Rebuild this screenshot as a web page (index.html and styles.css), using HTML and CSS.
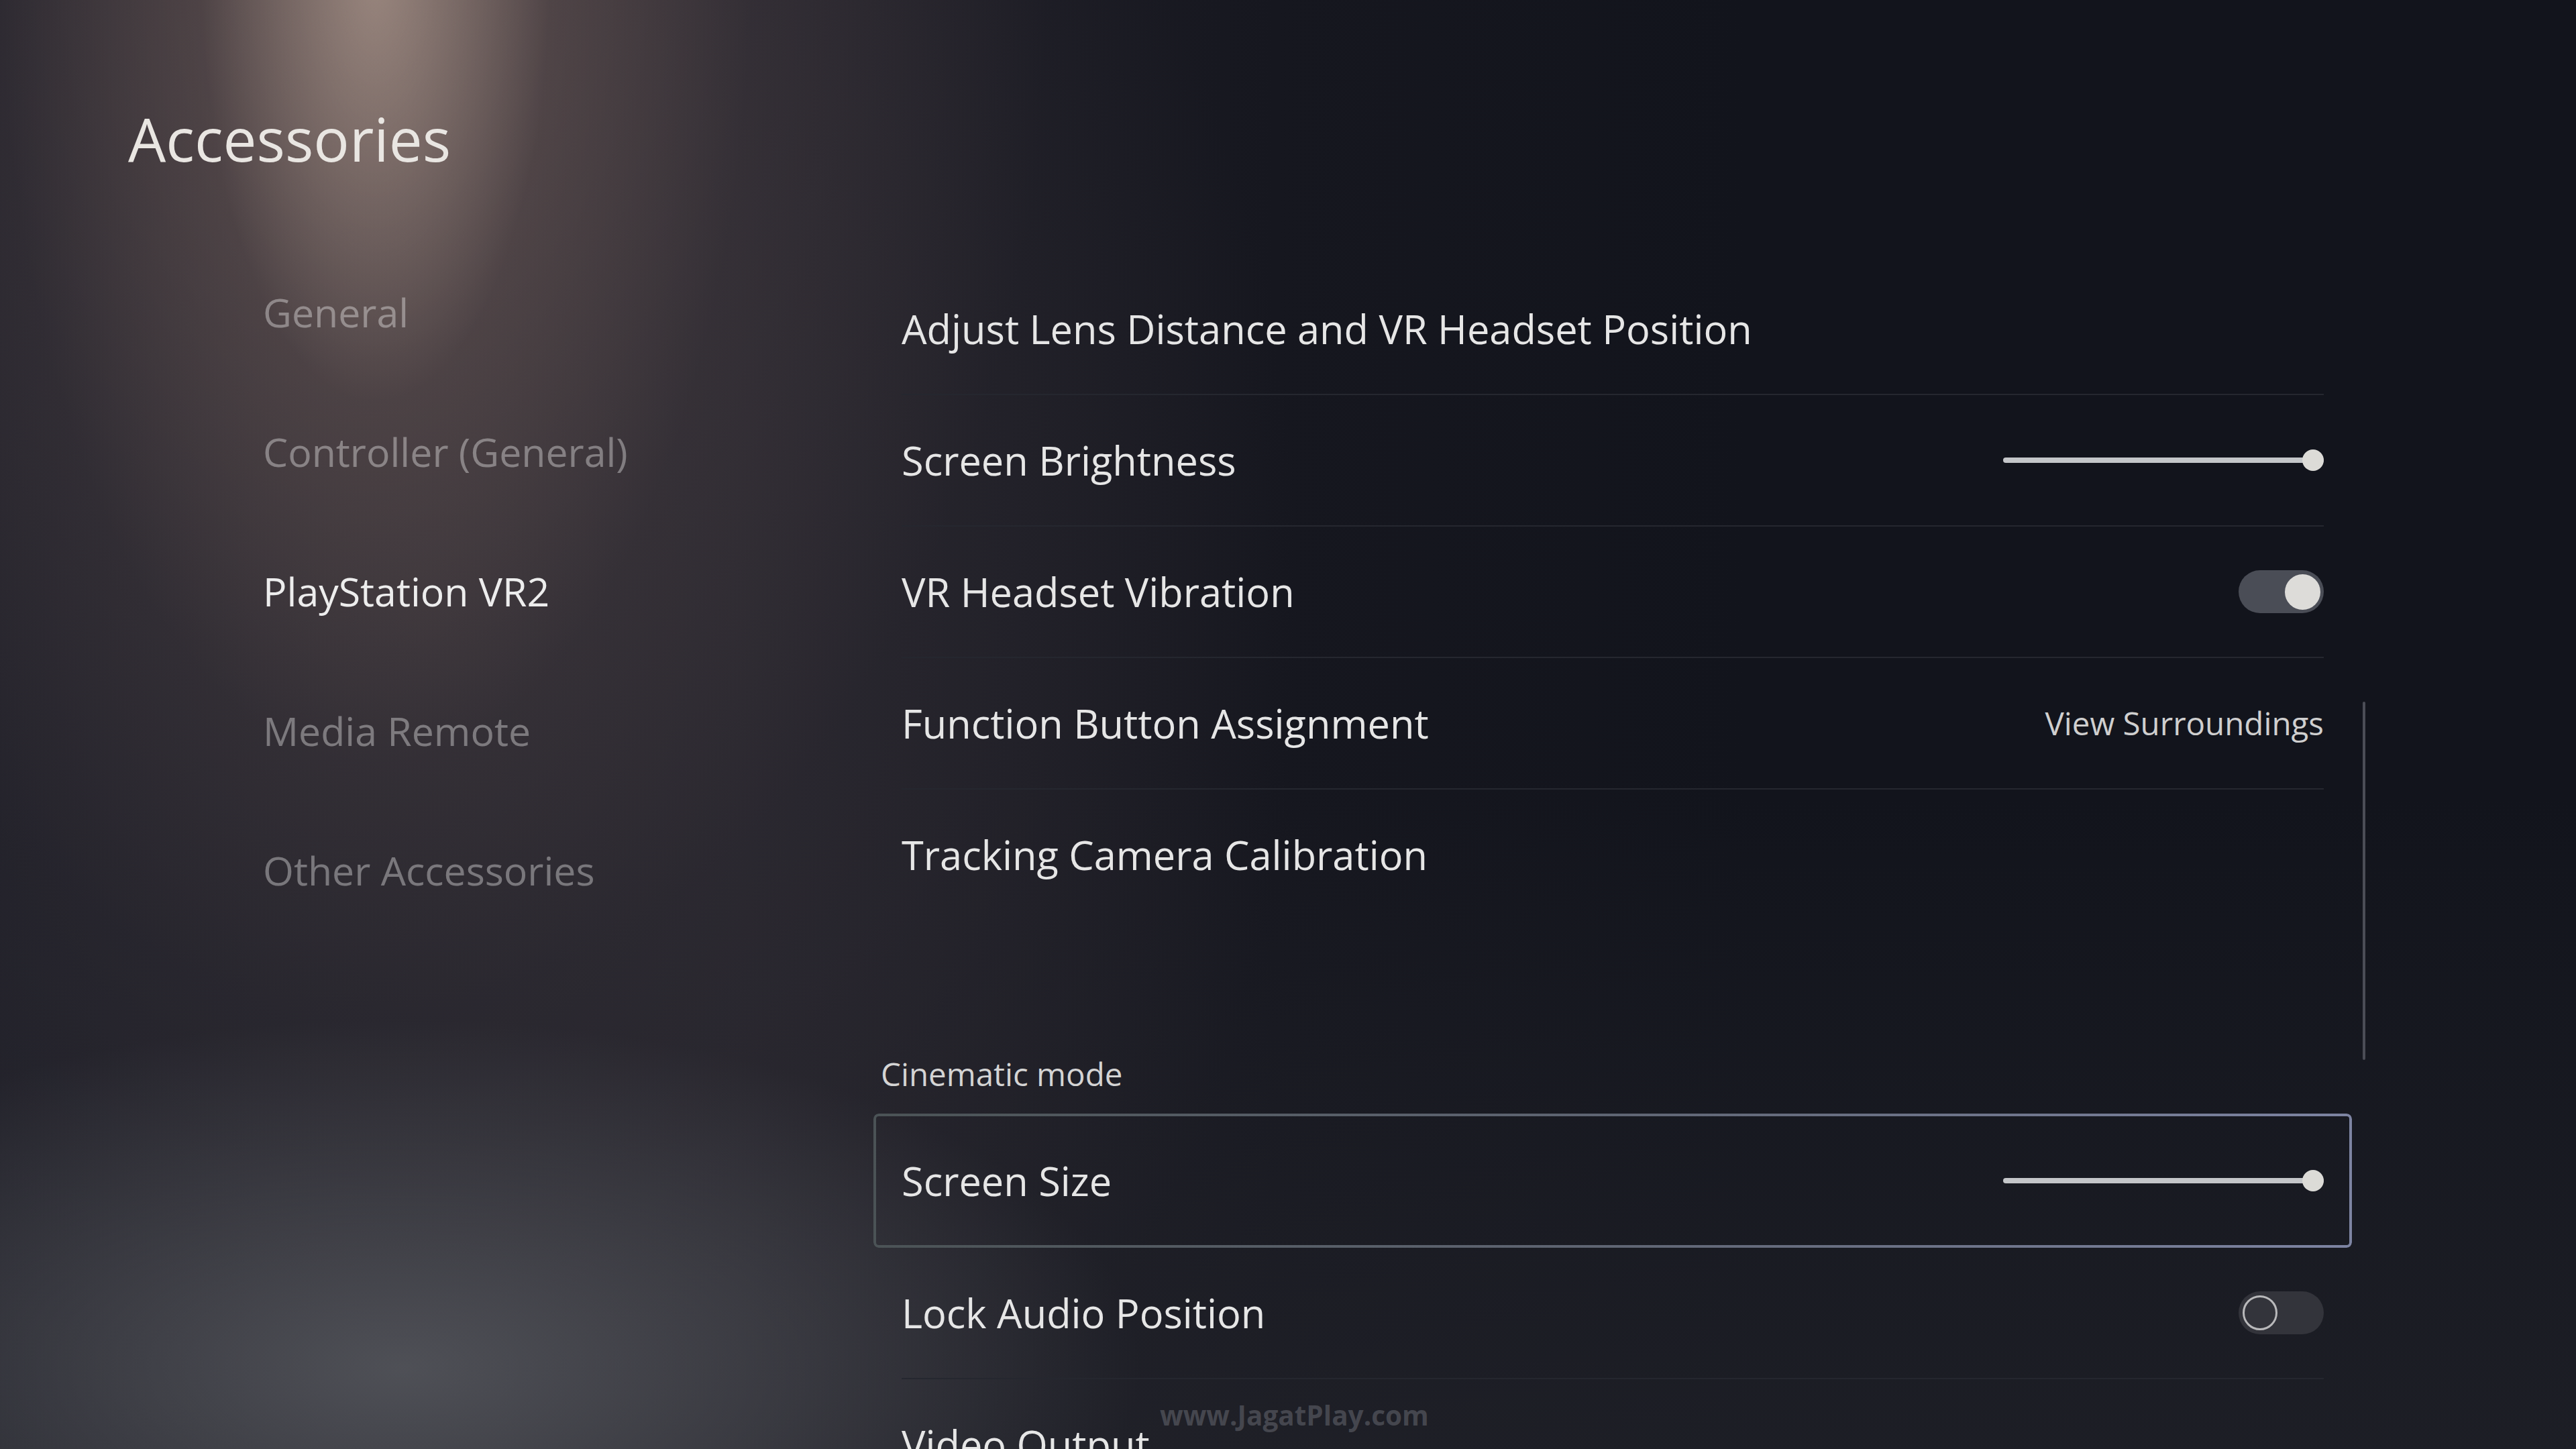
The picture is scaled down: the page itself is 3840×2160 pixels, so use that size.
FILE: index.html
```html
<!DOCTYPE html>
<html>

<head>
    <meta charset="utf-8">
    <meta name="viewport" content="width=device-width, initial-scale=1.0">
    <title>Accessories</title>
    <link rel="stylesheet" href="styles.css">
</head>

<body>
    <div class="screen">
        <!-- Colonne de gauche -->
        <aside class="side">
            <h1 class="title">Accessories</h1>
            <ul class="nav">
                <li>General</li>
                <li>Controller (General)</li>
                <li class="active">PlayStation VR2</li>
                <li>Media Remote</li>
                <li>Other Accessories</li>
            </ul>
        </aside>

        <!-- Réglages -->
        <main class="content">
            <ul class="list">
                <li class="row"><span class="label">Adjust Lens Distance and VR Headset Position</span></li>
                <li class="row">
                    <span class="label">Screen Brightness</span>
                    <div class="slider"><div class="knob"></div></div>
                </li>
                <li class="row">
                    <span class="label">VR Headset Vibration</span>
                    <div class="toggle on"><div class="knob"></div></div>
                </li>
                <li class="row">
                    <span class="label">Function Button Assignment</span>
                    <span class="value">View Surroundings</span>
                </li>
                <li class="row last"><span class="label">Tracking Camera Calibration</span></li>
            </ul>

            <h2 class="section">Cinematic mode</h2>
            <ul class="list">
                <li class="row focused">
                    <span class="label">Screen Size</span>
                    <div class="slider"><div class="knob"></div></div>
                </li>
                <li class="row">
                    <span class="label">Lock Audio Position</span>
                    <div class="toggle"><div class="knob"></div></div>
                </li>
                <li class="row"><span class="label">Video Output</span></li>
            </ul>
        </main>

        <div class="scrollbar"></div>
        <div class="watermark">www.JagatPlay.com</div>
    </div>
</body>

</html>
```

FILE: styles.css
```css
/* Style général */
body {
    margin: 0;
    padding: 0;
    width: 3840px;
    height: 2160px;
    overflow: hidden;
    font-family: 'Open Sans', 'Noto Sans', sans-serif;
    color: #e6e6e6;
    background-color: #12141c;
}

ul {
    list-style: none;
    margin: 0;
    padding: 0;
}

.screen {
    position: relative;
    width: 3840px;
    height: 2160px;
    display: grid;
    grid-template-columns: 1302px 2204px 1fr;
    background:
        radial-gradient(ellipse 260px 640px at 560px -40px, rgba(196, 174, 160, 0.55), transparent),
        radial-gradient(ellipse 560px 1200px at 560px -60px, rgba(140, 116, 108, 0.45), transparent),
        radial-gradient(ellipse 1000px 1500px at 560px 0, rgba(90, 76, 78, 0.55), transparent),
        radial-gradient(ellipse 1100px 520px at 600px 2040px, rgba(92, 94, 100, 0.75), transparent),
        radial-gradient(ellipse 1300px 1700px at 640px 900px, rgba(52, 48, 54, 0.8), transparent),
        linear-gradient(180deg, rgba(18, 20, 28, 0) 55%, rgba(36, 37, 44, 0.6) 100%),
        linear-gradient(90deg, #1a1b25 0, #22212a 1100px, #16171f 1900px, #12141c 2600px, #12141c 100%);
}

/* Colonne de gauche */
.side {
    padding: 162px 0 0 191px;
}

.title {
    margin: 0;
    font-size: 89px;
    font-weight: 400;
    line-height: 1;
    color: #e9e6e2;
}

.nav {
    margin: 110px 0 0 201px;
}

.nav li {
    height: 208px;
    line-height: 208px;
    font-size: 59px;
    color: rgba(255, 255, 255, 0.36);
    white-space: nowrap;
}

.nav li.active {
    color: #ededed;
}

/* Réglages */
.content {
    padding-top: 393px;
}

.row {
    display: flex;
    align-items: center;
    justify-content: space-between;
    height: 194px;
    margin: 0 42px;
    border-bottom: 2px solid #25272f;
}

.row.last {
    border-bottom-color: transparent;
}

.label {
    font-size: 59.5px;
    line-height: 1;
    white-space: nowrap;
}

.value {
    font-size: 47.5px;
    line-height: 1;
    color: #cfcfcf;
}

.section {
    margin: 204px 0 35px 11px;
    font-size: 47.5px;
    font-weight: 400;
    line-height: 1;
    color: #d4d4d4;
}

/* Ligne sélectionnée */
.row.focused {
    position: relative;
    height: 200px;
    margin: 0;
    padding: 0 42px;
    border-bottom: none;
}

.row.focused::before {
    content: "";
    position: absolute;
    inset: 0;
    padding: 4px;
    border-radius: 8px;
    background: linear-gradient(90deg, #4b5356, #5f6573 50%, #7d84a2);
    -webkit-mask: linear-gradient(#000 0 0) content-box, linear-gradient(#000 0 0);
    -webkit-mask-composite: xor;
    mask-composite: exclude;
}

/* Curseur */
.slider {
    position: relative;
    width: 478px;
    height: 8px;
    border-radius: 4px;
    background: #c4c6c9;
}

.slider .knob {
    position: absolute;
    right: 0;
    top: -12px;
    width: 32px;
    height: 32px;
    border-radius: 50%;
    background: #dcdbd7;
}

/* Interrupteur */
.toggle {
    display: flex;
    align-items: center;
    width: 127px;
    height: 64px;
    padding: 0 6px;
    box-sizing: border-box;
    border-radius: 32px;
    background: #33343b;
}

.toggle .knob {
    width: 46px;
    height: 46px;
    border: 3px solid #b9b9bb;
    border-radius: 50%;
    background: transparent;
}

.toggle.on {
    justify-content: flex-end;
    padding: 0 5px;
    background: #4a4d56;
}

.toggle.on .knob {
    width: 53px;
    height: 53px;
    border: none;
    background: #dddcd9;
}

/* Barre de défilement */
.scrollbar {
    position: absolute;
    left: 3522px;
    top: 1046px;
    width: 4px;
    height: 534px;
    border-radius: 2px;
    background: #4b4d56;
}

.watermark {
    position: absolute;
    left: 1729px;
    top: 2082px;
    font-size: 40.5px;
    font-weight: 700;
    color: rgba(120, 122, 130, 0.45);
}
```
